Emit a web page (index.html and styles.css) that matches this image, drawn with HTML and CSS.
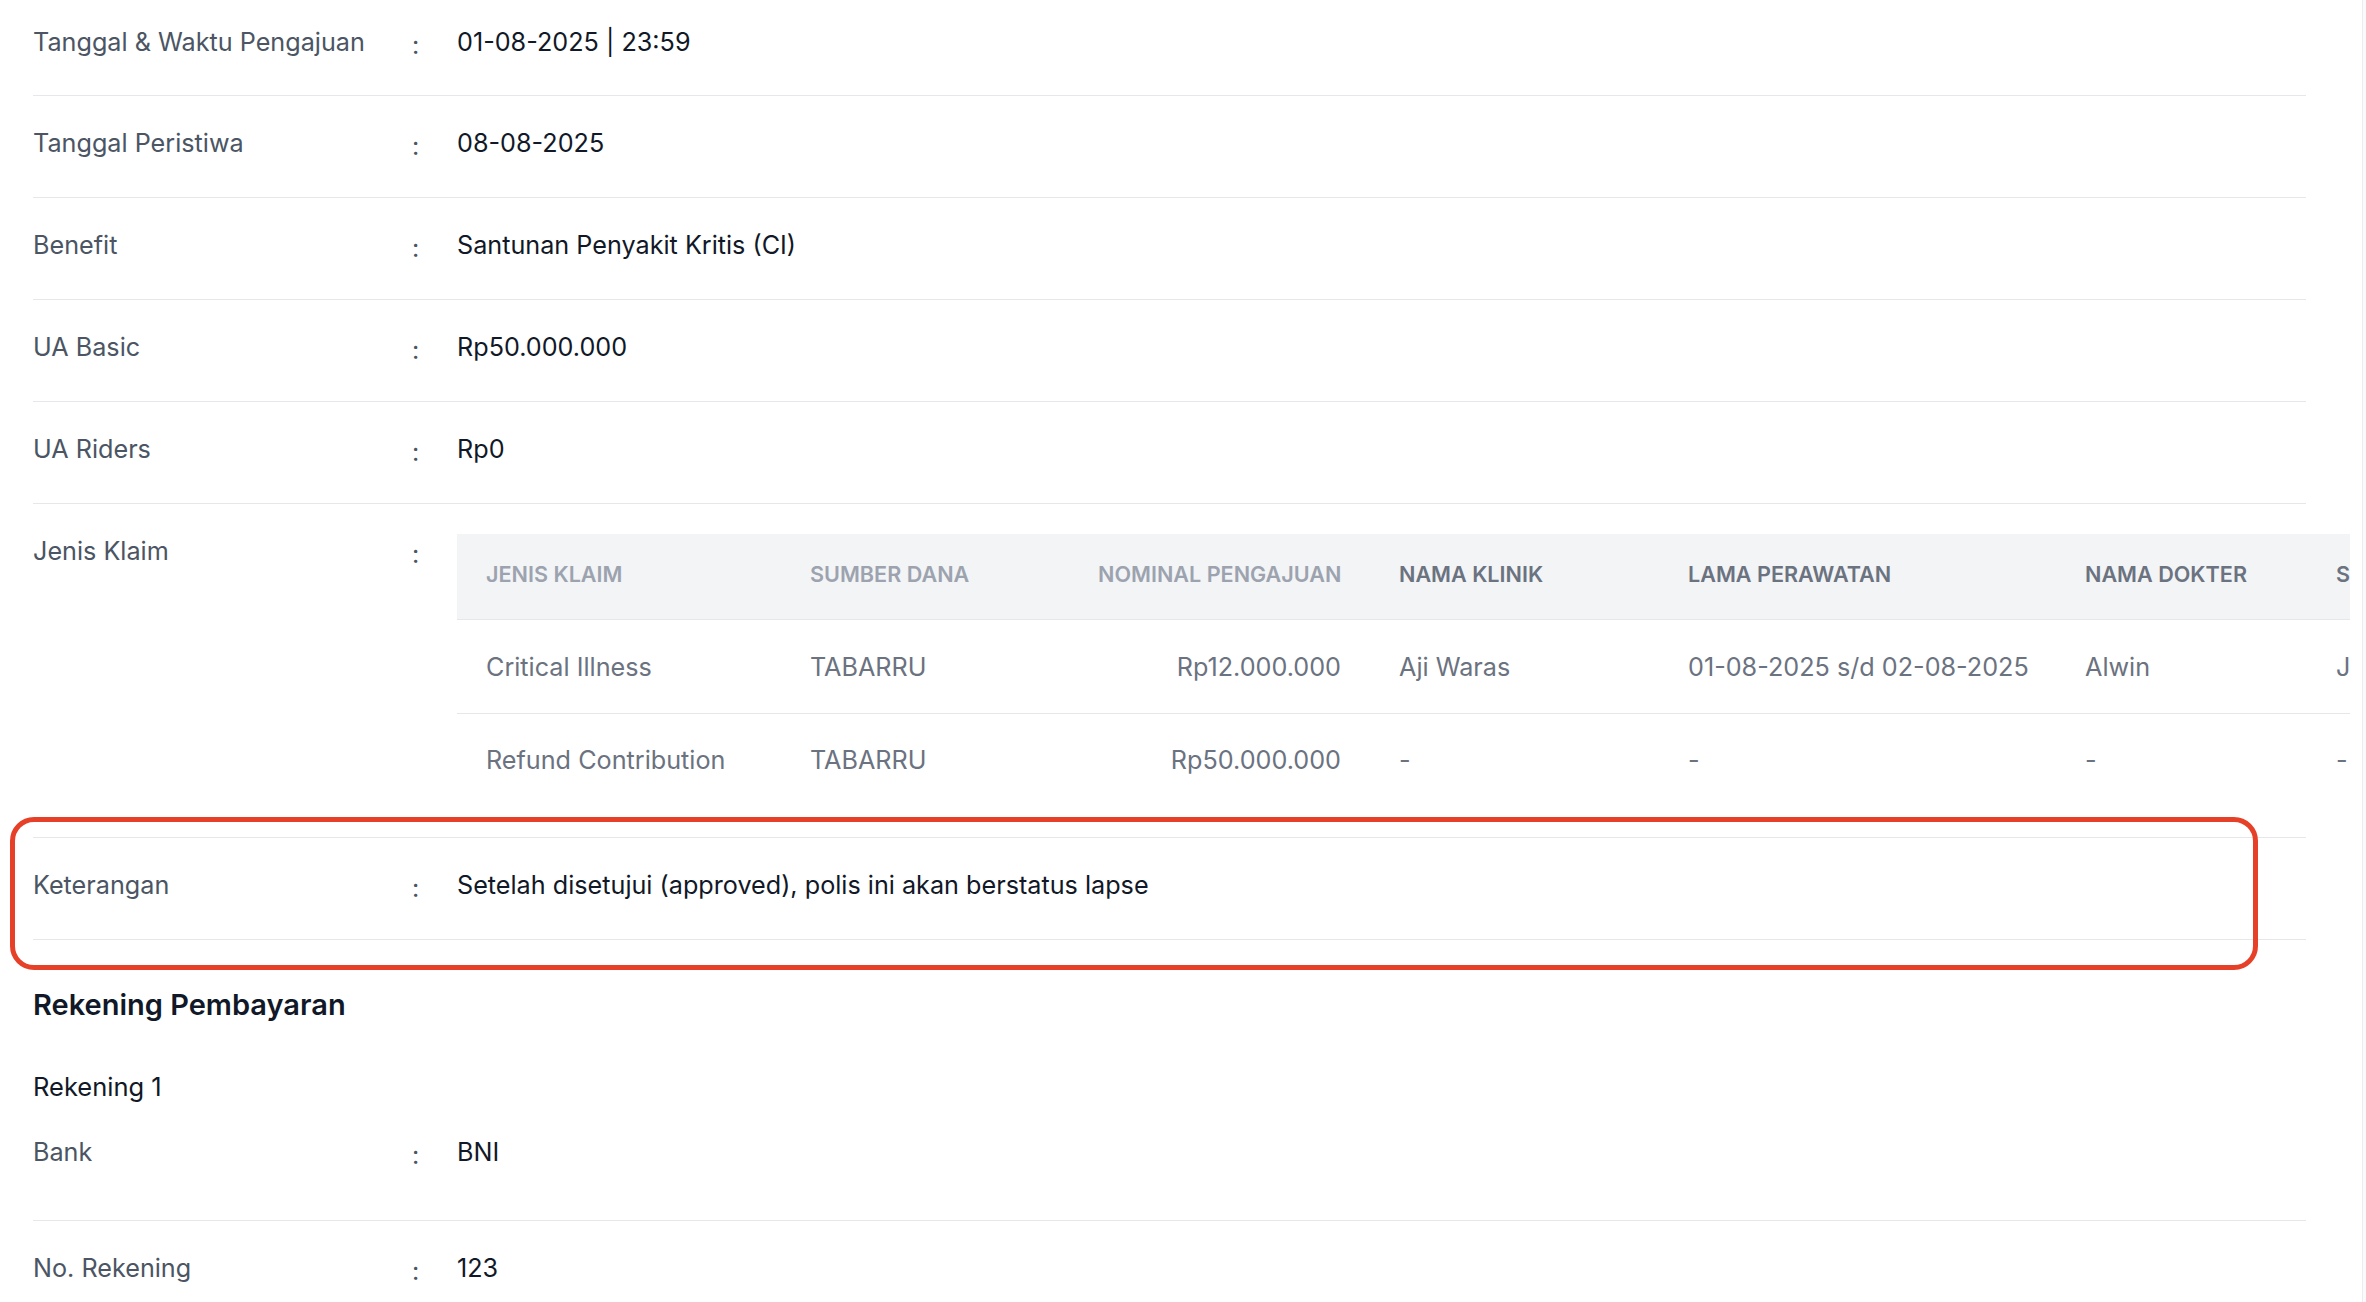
FILE: index.html
```html
<!DOCTYPE html>
<html lang="id">
<head>
<meta charset="utf-8">
<title>Detail Klaim</title>
<link rel="stylesheet" href="styles.css">
</head>
<body>
<div class="scroll-track"></div>
<main class="page">
  <section class="details details-top">
    <div class="row">
      <div class="label">Tanggal &amp; Waktu Pengajuan</div>
      <div class="colon">:</div>
      <div class="value">01-08-2025 | 23:59</div>
    </div>
    <div class="row">
      <div class="label">Tanggal Peristiwa</div>
      <div class="colon">:</div>
      <div class="value">08-08-2025</div>
    </div>
    <div class="row">
      <div class="label">Benefit</div>
      <div class="colon">:</div>
      <div class="value">Santunan Penyakit Kritis (CI)</div>
    </div>
    <div class="row">
      <div class="label">UA Basic</div>
      <div class="colon">:</div>
      <div class="value">Rp50.000.000</div>
    </div>
    <div class="row">
      <div class="label">UA Riders</div>
      <div class="colon">:</div>
      <div class="value">Rp0</div>
    </div>
    <div class="row row-table">
      <div class="label">Jenis Klaim</div>
      <div class="colon">:</div>
      <div class="value value-table">
        <div class="table-wrap">
          <table class="claims">
            <colgroup>
              <col class="c1"><col class="c2"><col class="c3"><col class="c4"><col class="c5"><col class="c6"><col class="c7">
            </colgroup>
            <thead>
              <tr>
                <th class="muted">JENIS KLAIM</th>
                <th class="muted">SUMBER DANA</th>
                <th class="muted num">NOMINAL PENGAJUAN</th>
                <th>NAMA KLINIK</th>
                <th>LAMA PERAWATAN</th>
                <th>NAMA DOKTER</th>
                <th>SPESIALIS</th>
              </tr>
            </thead>
            <tbody>
              <tr>
                <td>Critical Illness</td>
                <td>TABARRU</td>
                <td class="num">Rp12.000.000</td>
                <td>Aji Waras</td>
                <td>01-08-2025 s/d 02-08-2025</td>
                <td>Alwin</td>
                <td>Jantung</td>
              </tr>
              <tr>
                <td>Refund Contribution</td>
                <td>TABARRU</td>
                <td class="num">Rp50.000.000</td>
                <td>-</td>
                <td>-</td>
                <td>-</td>
                <td>-</td>
              </tr>
            </tbody>
          </table>
        </div>
      </div>
    </div>
    <div class="row">
      <div class="label">Keterangan</div>
      <div class="colon">:</div>
      <div class="value">Setelah disetujui (approved), polis ini akan berstatus lapse</div>
    </div>
  </section>

  <h2 class="section-title">Rekening Pembayaran</h2>
  <h3 class="sub-title">Rekening 1</h3>
  <section class="details">
    <div class="row row-bank">
      <div class="label">Bank</div>
      <div class="colon">:</div>
      <div class="value">BNI</div>
    </div>
    <div class="row">
      <div class="label">No. Rekening</div>
      <div class="colon">:</div>
      <div class="value">123</div>
    </div>
  </section>

  <div class="highlight"></div>
</main>
</body>
</html>
```

FILE: styles.css
```css
* { box-sizing: border-box; }

html, body {
  margin: 0;
  padding: 0;
  background: #ffffff;
}

body {
  font-family: Inter, "Noto Sans", "Liberation Sans", sans-serif;
  font-size: 25.2px;
  line-height: 36px;
  color: #111827;
  overflow: hidden;
  height: 1302px;
}

.page {
  position: relative;
  display: flow-root;
  width: 2273px;
  margin-left: 33px;
}

.details-top {
  margin-top: -5.5px;
}

.row {
  display: grid;
  grid-template-columns: 379px 45px 1fr;
  align-items: start;
  padding: 29px 0 35.9px;
  border-bottom: 1px solid #e5e7eb;
}

.row:last-child {
  border-bottom: none;
}

.details-top .row:last-child {
  border-bottom: 1px solid #e5e7eb;
}

.label {
  color: #4b5563;
  line-height: 36px;
}

.colon {
  color: #4b5563;
  padding-top: 6px;
  line-height: 30px;
}

.value {
  color: #111827;
  min-width: 0;
  line-height: 36px;
}

.row-table {
  padding-bottom: 31px;
}

.value-table {
  margin-right: -44px;
  padding-top: 1px;
}

.table-wrap {
  overflow: hidden;
  width: 100%;
}

.claims {
  border-collapse: collapse;
  table-layout: fixed;
  width: 2150px;
}

.claims col.c1 { width: 324px; }
.claims col.c2 { width: 288px; }
.claims col.c3 { width: 301px; }
.claims col.c4 { width: 289px; }
.claims col.c5 { width: 397px; }
.claims col.c6 { width: 251px; }
.claims col.c7 { width: 300px; }

.claims th {
  background: #f3f4f6;
  color: #6b7280;
  font-size: 21.6px;
  font-weight: 600;
  line-height: 32px;
  text-align: left;
  padding: 24px 28px 29.5px 29px;
  border-bottom: 1px solid #e5e7eb;
  white-space: nowrap;
}

.claims th.muted {
  color: #9ca3af;
}

.claims td {
  color: #6b7280;
  padding: 28.2px 28px 28.2px 29px;
  line-height: 36px;
  white-space: nowrap;
}

.claims tbody tr + tr td {
  border-top: 1px solid #e5e7eb;
}

.claims .num {
  text-align: right;
  padding-right: 29px;
}

.section-title {
  margin: 44.5px 0 0;
  font-size: 29px;
  line-height: 40px;
  font-weight: 600;
  color: #111827;
}

.sub-title {
  margin: 44px 0 0;
  font-size: 25.5px;
  line-height: 36px;
  font-weight: 400;
  color: #111827;
}

.row-bank {
  padding-bottom: 50px;
  border-bottom: 1px solid #e5e7eb;
}

.highlight {
  position: absolute;
  left: -23px;
  top: 817px;
  width: 2248px;
  height: 153px;
  border: 5px solid #e64128;
  border-radius: 24px;
  pointer-events: none;
}

.scroll-track {
  position: fixed;
  top: 0;
  right: 0;
  width: 4px;
  height: 100%;
  background: #fafafa;
  border-left: 1px solid #ececec;
}
```
